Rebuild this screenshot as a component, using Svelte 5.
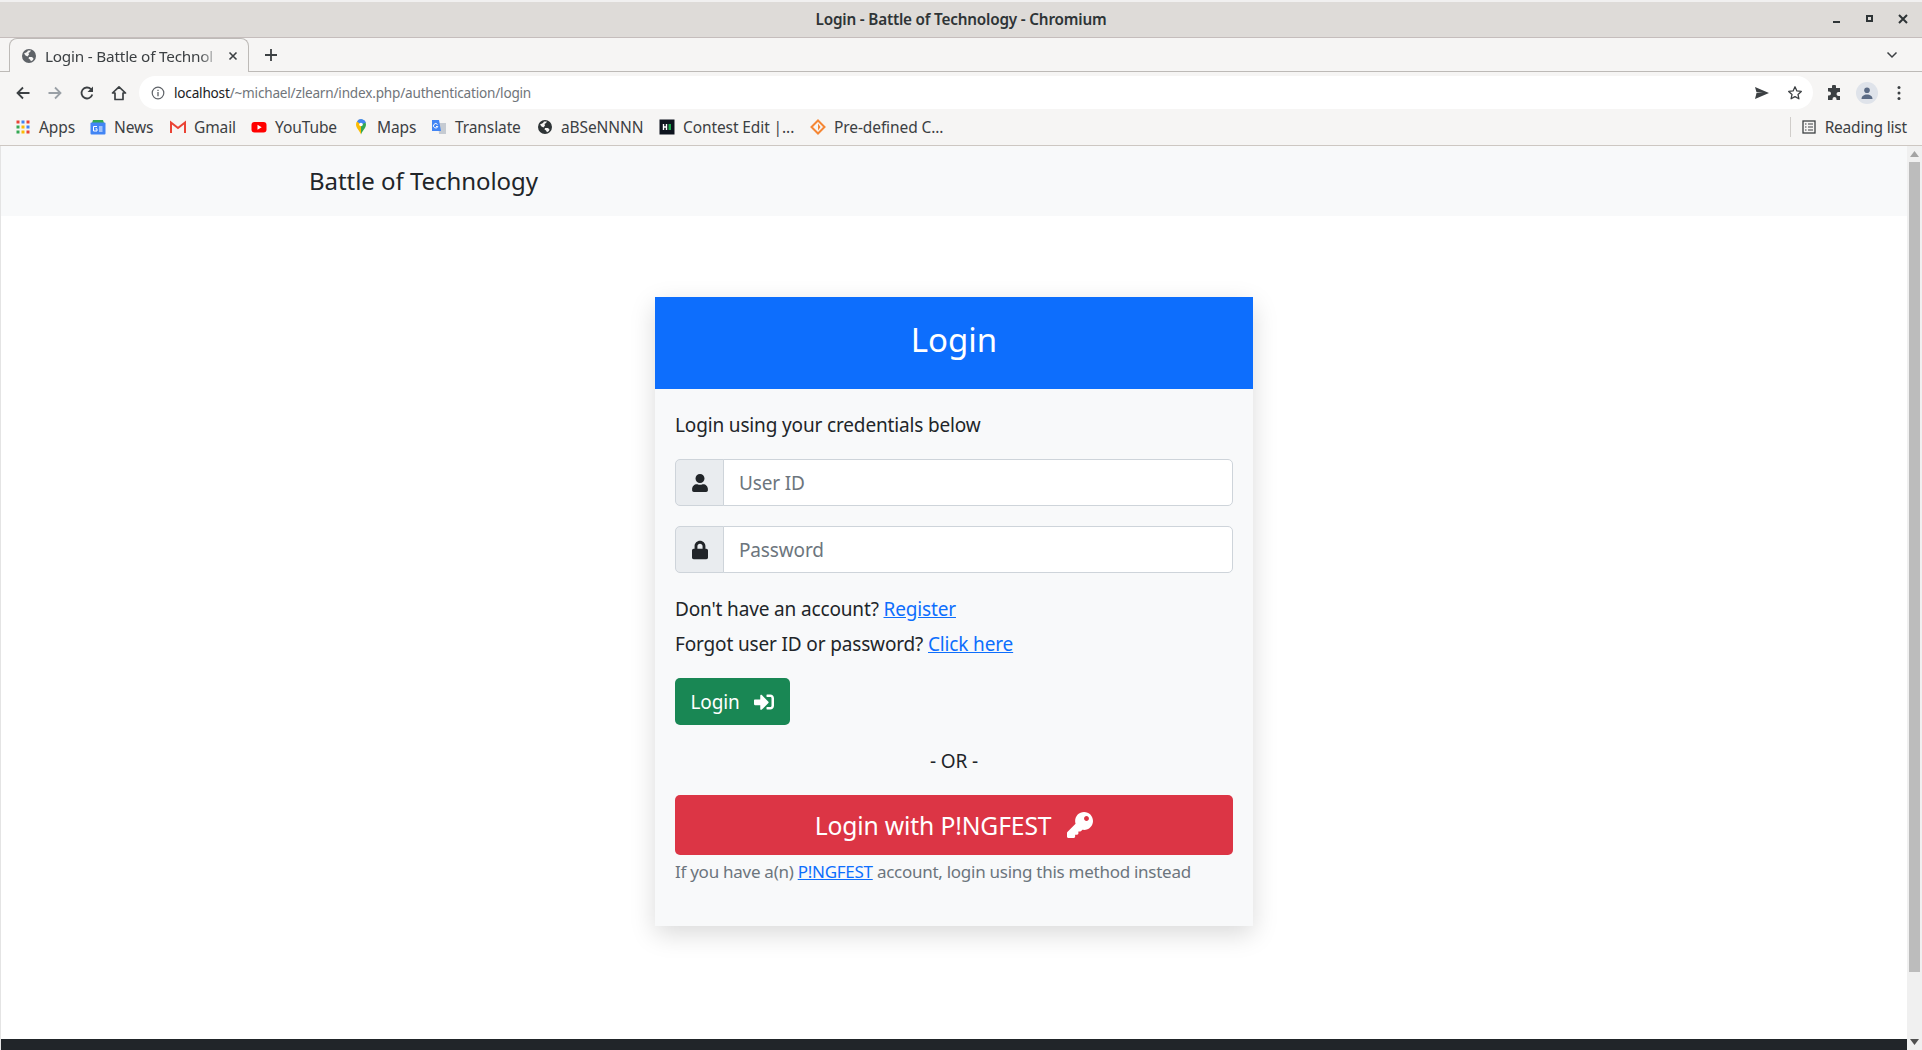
<script>
    const bookmarks = [
        { name: "Apps", icon: "apps" },
        { name: "News", icon: "news" },
        { name: "Gmail", icon: "gmail" },
        { name: "YouTube", icon: "youtube" },
        { name: "Maps", icon: "maps" },
        { name: "Translate", icon: "translate" },
        { name: "aBSeNNNN", icon: "globe" },
        { name: "Contest Edit |...", icon: "hr" },
        { name: "Pre-defined C...", icon: "diamond" }
    ];
    const appColors = ["#ea4335", "#4285f4", "#ea4335", "#34a853", "#fbbc04", "#4285f4", "#34a853", "#fbbc04", "#ea4335"];
    const globe = "M8 1a7 7 0 1 0 0 14A7 7 0 0 0 8 1zM3 5.5 6 4l1-1.5h3L9 4 7.5 5 8 6.500 6.500 8.500 4.500 7.500zM10 13.300l-1-1.800-1.500-1 .5-1.500h3l1.500 1.500-.5 1.500z";
</script>

<div class="screen">
    <header class="chrome">
        <div class="titlebar">
            <span class="window-title">Login - Battle of Technology - Chromium</span>
            <div class="window-buttons">
                <svg width="12" height="12" viewBox="0 0 12 12"><rect x="2" y="8" width="7" height="2" fill="#2e3436"/></svg>
                <svg width="12" height="12" viewBox="0 0 12 12"><rect x="3" y="3" width="5" height="5" fill="none" stroke="#2e3436" stroke-width="2"/></svg>
                <svg width="12" height="12" viewBox="0 0 12 12"><path d="M2 2l8 8M10 2l-8 8" stroke="#2e3436" stroke-width="2"/></svg>
            </div>
        </div>

        <div class="tabstrip">
            <div class="tab">
                <svg class="favicon" width="16" height="16" viewBox="0 0 16 16"><path fill-rule="evenodd" fill="#5f6368" d={globe}/></svg>
                <span class="tab-title">Login - Battle of Technol</span>
                <svg class="tab-close" width="10" height="10" viewBox="0 0 10 10"><path d="M1.500 1.500l7 7M8.500 1.500l-7 7" stroke="#3c4043" stroke-width="1.600"/></svg>
            </div>
            <svg class="new-tab" width="14" height="14" viewBox="0 0 14 14"><path d="M7 1v12M1 7h12" stroke="#3c4043" stroke-width="1.800"/></svg>
            <svg class="tab-menu" width="12" height="8" viewBox="0 0 12 8"><path d="M1.500 1.500 6 6l4.500-4.500" fill="none" stroke="#3c4043" stroke-width="1.500"/></svg>
        </div>

        <div class="toolbar">
            <svg width="16" height="16" viewBox="0 0 16 16"><path d="M14.500 8H2.500M8 2.500 2.500 8 8 13.500" fill="none" stroke="#3c4043" stroke-width="1.800"/></svg>
            <svg width="16" height="16" viewBox="0 0 16 16"><path d="M1.500 8h12M8 2.500 13.500 8 8 13.500" fill="none" stroke="#9aa0a6" stroke-width="1.800"/></svg>
            <svg width="16" height="16" viewBox="0 0 16 16"><path d="M13.300 9.500A5.500 5.500 0 1 1 12 4.200" fill="none" stroke="#3c4043" stroke-width="1.800"/><path d="M14 1.500v5.500H8.500z" fill="#3c4043"/></svg>
            <svg width="16" height="16" viewBox="0 0 16 16"><path d="M8 1.800 1.500 8H4v6.500h8V8h2.500z" fill="none" stroke="#3c4043" stroke-width="1.700" stroke-linejoin="round"/></svg>
            <div class="omnibox">
                <svg width="14" height="14" viewBox="0 0 14 14"><circle cx="7" cy="7" r="5.800" fill="none" stroke="#5f6368" stroke-width="1.200"/><path d="M7 6v4.200M7 3.700v1.300" stroke="#5f6368" stroke-width="1.300"/></svg>
                <span class="url"><b>localhost</b>/~michael/zlearn/index.php/authentication/login</span>
                <svg class="send" width="16" height="14" viewBox="0 0 16 14"><path d="M1 1l14 6-14 6 1.500-6L9 7 2.500 6.200z" fill="#3c4043"/></svg>
                <svg class="star" width="16" height="16" viewBox="0 0 16 16"><path d="M8 1.800l1.900 4.100 4.400.5-3.300 3 .9 4.400L8 11.600l-3.900 2.200.9-4.400-3.300-3 4.400-.5z" fill="none" stroke="#3c4043" stroke-width="1.300" stroke-linejoin="round"/></svg>
            </div>
            <svg class="puzzle" width="16" height="16" viewBox="0 0 16 16"><path d="M6 1.500a2 2 0 0 1 4 0V3h4v4h-1.500a2 2 0 0 0 0 4H14v4h-3.500v-1a2 2 0 0 0-4 0v1H2v-4.500h1a2 2 0 0 0 0-4H2V3h4z" fill="#3c4043"/></svg>
            <div class="avatar">
                <svg width="14" height="14" viewBox="0 0 14 14"><circle cx="7" cy="4.200" r="2.800" fill="#5b6b85"/><path d="M1.500 13c0-3 2.500-4.500 5.500-4.500s5.500 1.500 5.500 4.500z" fill="#5b6b85"/></svg>
            </div>
            <svg class="dots" width="4" height="16" viewBox="0 0 4 16"><circle cx="2" cy="2.500" r="1.500" fill="#3c4043"/><circle cx="2" cy="8" r="1.500" fill="#3c4043"/><circle cx="2" cy="13.500" r="1.500" fill="#3c4043"/></svg>
        </div>

        <div class="bookmarks">
            {#each bookmarks as b}
                <div class="bookmark">
                    <svg width="16" height="16" viewBox="0 0 16 16">
                        {#if b.icon === "apps"}
                            {#each appColors as c, i}
                                <rect x={1.500 + (i % 3) * 5} y={1.500 + Math.floor(i / 3) * 5} width="3" height="3" fill={c}/>
                            {/each}
                        {:else if b.icon === "news"}
                            <path d="M3 1h10l1 3H2z" fill="#34a853"/>
                            <rect x="0.500" y="3.500" width="15" height="12" rx="1" fill="#4285f4"/>
                            <path d="M7 7.500H3.500v4.500H7V9.800H5.500M9 8h3.500M9 10h3.500M9 12h3.500" fill="none" stroke="#fff" stroke-width="1"/>
                        {:else if b.icon === "gmail"}
                            <path d="M1 14V3.500l7 5.500 7-5.500V14" fill="none" stroke="#ea4335" stroke-width="2"/>
                        {:else if b.icon === "youtube"}
                            <rect x="0.500" y="3" width="15" height="10.500" rx="3" fill="#f00"/>
                            <path d="M6.500 5.800v5l4.200-2.500z" fill="#fff"/>
                        {:else if b.icon === "maps"}
                            <path d="M8 .5a5 5 0 0 0-5 5c0 3.500 3.500 6 5 10z" fill="#fbbc04"/>
                            <path d="M8 .5a5 5 0 0 1 5 5c0 3.500-3.500 6-5 10z" fill="#34a853"/>
                            <path d="M4 2.500A5 5 0 0 1 13 3.500L8 5.500z" fill="#4285f4"/>
                            <circle cx="8" cy="5.500" r="1.800" fill="#fff"/>
                        {:else if b.icon === "translate"}
                            <path d="M7 4h8v11H8z" fill="#c6cbd2"/>
                            <path d="M1 1h7l2 11H1z" fill="#4285f4"/>
                            <path d="M6.500 5.500a2.200 2.200 0 1 0 .3 2H5" fill="none" stroke="#fff" stroke-width="1"/>
                        {:else if b.icon === "globe"}
                            <path fill-rule="evenodd" fill="#2e3436" d={globe}/>
                        {:else if b.icon === "hr"}
                            <rect x="0.500" y="0.500" width="15" height="15" fill="#0e141e"/>
                            <path d="M4.500 5v6M7.500 5v6M4.500 8h3" stroke="#fff" stroke-width="1.400"/>
                            <rect x="9.500" y="5" width="2.500" height="6" fill="#1ba94c"/>
                        {:else}
                            <path d="M8 1.500 14.500 8 8 14.500 1.500 8z" fill="none" stroke="#f58634" stroke-width="2"/>
                            <path d="M8 4.500 10.500 8 8 11.500z" fill="#f58634"/>
                        {/if}
                    </svg>
                    <span>{b.name}</span>
                </div>
            {/each}
            <div class="reading">
                <svg width="14" height="14" viewBox="0 0 14 14"><rect x="1" y="1" width="12" height="12" fill="none" stroke="#3c4043" stroke-width="1.300"/><path d="M3 4h1.500M3 7h1.500M3 10h1.500M6 4h5M6 7h5M6 10h5" stroke="#3c4043" stroke-width="1.200"/></svg>
                <span>Reading list</span>
            </div>
        </div>
    </header>

    <div class="viewport">
        <div class="page">
            <nav class="navbar"><span class="brand">Battle of Technology</span></nav>

            <main class="content">
                <section class="card">
                    <div class="card-header">Login</div>
                    <div class="card-body">
                        <p class="intro">Login using your credentials below</p>

                        <div class="input-group">
                            <span class="addon">
                                <svg width="16" height="18" viewBox="0 0 448 512"><path fill="#212529" d="M224 256c70.700 0 128-57.300 128-128S294.700 0 224 0 96 57.300 96 128s57.300 128 128 128zm89.600 32h-16.700c-22.200 10.200-46.900 16-72.900 16s-50.600-5.800-72.900-16h-16.700C60.200 288 0 348.200 0 422.400V464c0 26.500 21.500 48 48 48h352c26.500 0 48-21.500 48-48v-41.600c0-74.200-60.200-134.400-134.400-134.400z"/></svg>
                            </span>
                            <input type="text" placeholder="User ID" />
                        </div>
                        <div class="input-group">
                            <span class="addon">
                                <svg width="16" height="20" viewBox="0 0 448 512"><path fill="#212529" d="M400 224h-24v-72C376 68.200 307.800 0 224 0S72 68.200 72 152v72H48c-26.500 0-48 21.500-48 48v192c0 26.500 21.500 48 48 48h352c26.500 0 48-21.500 48-48V272c0-26.500-21.500-48-48-48zm-104 0H152v-72c0-39.700 32.300-72 72-72s72 32.300 72 72v72z"/></svg>
                            </span>
                            <input type="password" placeholder="Password" />
                        </div>

                        <p class="line">Don't have an account? <a href="#register">Register</a></p>
                        <p class="line">Forgot user ID or password? <a href="#forgot">Click here</a></p>

                        <button class="btn btn-login">
                            Login
                            <svg width="22" height="20" viewBox="0 0 512 512"><path fill="#fff" d="M416 448h-84c-6.600 0-12-5.400-12-12v-40c0-6.600 5.400-12 12-12h84c17.700 0 32-14.300 32-32V160c0-17.700-14.300-32-32-32h-84c-6.600 0-12-5.400-12-12V76c0-6.600 5.400-12 12-12h84c53 0 96 43 96 96v192c0 53-43 96-96 96zm-47-201L201 79c-15-15-41-4.500-41 17v96H24c-13.300 0-24 10.700-24 24v96c0 13.300 10.700 24 24 24h136v96c0 21.500 26 32 41 17l168-168c9.300-9.400 9.300-24.600 0-34z"/></svg>
                        </button>

                        <div class="or">- OR -</div>

                        <button class="btn btn-sso">
                            Login with P!NGFEST
                            <svg width="26" height="26" viewBox="0 0 512 512"><path fill="#fff" d="M512 176.001C512 273.203 433.202 352 336 352c-11.220 0-22.190-1.062-32.827-3.069l-24.012 27.014A23.999 23.999 0 0 1 261.223 384H224v40c0 13.255-10.745 24-24 24h-40v40c0 13.255-10.745 24-24 24H24c-13.255 0-24-10.745-24-24v-78.059c0-6.365 2.529-12.470 7.029-16.971l161.802-161.802C163.108 213.814 160 195.271 160 176 160 78.798 238.797.001 335.999 0 433.488-.001 512 78.511 512 176.001zM336 128c0 26.510 21.490 48 48 48s48-21.490 48-48-21.490-48-48-48-48 21.490-48 48z"/></svg>
                        </button>

                        <p class="hint">If you have a(n) <a href="#pingfest">P!NGFEST</a> account, login using this method instead</p>
                    </div>
                </section>
            </main>

            <footer class="footer"></footer>
        </div>

        <div class="scrollbar">
            <svg width="9" height="6" viewBox="0 0 9 6"><path d="M4.500 0 9 6H0z" fill="#a3a3a3"/></svg>
            <div class="thumb"></div>
            <svg width="9" height="6" viewBox="0 0 9 6"><path d="M4.500 6 9 0H0z" fill="#505050"/></svg>
        </div>
    </div>
</div>

<style>
    :global(body) {
        overflow: hidden;
        background: #fff;
    }

    .screen {
        height: 1050px;
        display: flex;
        flex-direction: column;
        font-family: "Noto Sans", sans-serif;
        color: #212529;
    }

    .chrome {
        background: #f6f5f4;
        color: #3c4043;
        border-bottom: 1px solid #cdc7c2;
        flex-shrink: 0;
    }

    .titlebar {
        height: 38px;
        box-sizing: border-box;
        border-top: 2px solid #f1f0f0;
        background: #dedbd8;
        border-bottom: 1px solid #c5bdbc;
        display: flex;
        align-items: center;
        justify-content: center;
        padding-bottom: 2px;
        position: relative;
    }

    .window-title {
        font-size: 15.300px;
        font-weight: 600;
        color: #2e3436;
        letter-spacing: -0.2px;
    }

    .window-buttons {
        position: absolute;
        right: 13px;
        top: 11px;
        display: flex;
        gap: 21px;
    }

    .tabstrip {
        height: 34px;
        box-sizing: border-box;
        display: flex;
        align-items: flex-end;
        padding-left: 9px;
        border-bottom: 1px solid #bdbab7;
    }

    .tab {
        width: 240px;
        height: 34px;
        margin-bottom: -1px;
        box-sizing: border-box;
        background: #f6f5f4;
        border: 1px solid #bdbab7;
        border-bottom: 0;
        border-radius: 8px 8px 0 0;
        display: flex;
        align-items: center;
        padding: 0 10px 0 11px;
        gap: 8px;
        font-size: 15.300px;
    }

    .tab-title {
        flex: 1;
        overflow: hidden;
        white-space: nowrap;
        letter-spacing: -0.2px;
        -webkit-mask-image: linear-gradient(to right, #000 88%, transparent 100%);
        mask-image: linear-gradient(to right, #000 88%, transparent 100%);
    }

    .new-tab {
        margin: 0 0 9px 15px;
    }

    .tab-menu {
        margin: 0 24px 12px auto;
    }

    .toolbar {
        height: 37px;
        box-sizing: border-box;
        display: flex;
        align-items: center;
        padding: 4px 0 0 15px;
    }

    .toolbar > svg {
        margin-right: 16px;
    }

    .omnibox {
        width: 1674px;
        height: 33px;
        margin-left: -4px;
        background: #fff;
        border-radius: 17px;
        display: flex;
        align-items: center;
        padding: 0 10px 0 12px;
        box-sizing: border-box;
    }

    .url {
        margin-left: 9px;
        font-size: 13.600px;
        color: #70757a;
        letter-spacing: -0.2px;
    }

    .url b {
        font-weight: 400;
        color: #202124;
    }

    .send {
        margin-left: auto;
        margin-right: 17px;
    }

    .toolbar > .puzzle {
        margin-left: 13px;
        margin-right: 14px;
    }

    .avatar {
        width: 22px;
        height: 22px;
        border-radius: 50%;
        background: #dfe3ea;
        display: flex;
        align-items: center;
        justify-content: center;
        margin-right: 19px;
    }

    .bookmarks {
        height: 36px;
        display: grid;
        grid-template-columns: 75px 80px 81px 102px 78px 106px 122px 151px 1fr auto;
        align-items: center;
        padding-left: 15px;
        font-size: 15.500px;
    }

    .bookmark {
        display: flex;
        align-items: center;
        gap: 8px;
        letter-spacing: -0.1px;
        white-space: nowrap;
    }

    .reading {
        grid-column: 10;
        display: flex;
        align-items: center;
        gap: 9px;
        padding: 0 15px 0 12px;
        position: relative;
        letter-spacing: -0.2px;
    }

    .reading::before {
        content: "";
        position: absolute;
        left: 0;
        top: 1px;
        bottom: 1px;
        width: 1px;
        background: #d0cdca;
    }

    .viewport {
        flex: 1;
        min-height: 0;
        display: flex;
    }

    .page {
        flex: 1;
        min-width: 0;
        display: flex;
        flex-direction: column;
        border-left: 1px solid #e4e4e4;
    }

    .navbar {
        height: 70px;
        box-sizing: border-box;
        background: #f8f9fa;
        display: flex;
        align-items: center;
        padding: 0 0 2px 308px;
        flex-shrink: 0;
    }

    .brand {
        font-size: 24px;
        letter-spacing: -0.05px;
        color: #212529;
    }

    .content {
        flex: 1;
        display: flex;
        justify-content: center;
        align-items: flex-start;
        padding-top: 81px;
    }

    .card {
        width: 598px;
        background: #f8f9fa;
        box-shadow: 0 8px 24px rgba(0, 0, 0, 0.15);
    }

    .card-header {
        height: 92px;
        background: #0d6efd;
        color: #fff;
        font-size: 33px;
        display: flex;
        align-items: center;
        justify-content: center;
        padding-bottom: 8px;
        box-sizing: border-box;
    }

    .card-body {
        height: 537px;
        box-sizing: border-box;
        padding: 22px 20px 0;
        display: flex;
        flex-direction: column;
        font-size: 19px;
        letter-spacing: -0.15px;
    }

    p {
        margin: 0;
    }

    .intro {
        line-height: 28px;
        margin-bottom: 20px;
    }

    .input-group {
        display: flex;
        height: 47px;
        margin-bottom: 20px;
    }

    .addon {
        width: 49px;
        flex-shrink: 0;
        box-sizing: border-box;
        background: #e9ecef;
        border: 1px solid #ced4da;
        border-radius: 5px 0 0 5px;
        display: flex;
        align-items: center;
        justify-content: center;
    }

    input {
        flex: 1;
        min-width: 0;
        box-sizing: border-box;
        margin-left: -1px;
        border: 1px solid #ced4da;
        border-radius: 0 5px 5px 0;
        background: #fff;
        padding: 1px 15px 0;
        font: inherit;
        letter-spacing: inherit;
        color: #212529;
        outline: none;
    }

    input::placeholder {
        color: #6c757d;
        opacity: 1;
    }

    .line {
        line-height: 35px;
    }

    .input-group + .line {
        margin-top: -1px;
    }

    a {
        color: #0d6efd;
        text-decoration: underline;
    }

    .btn {
        border: none;
        color: #fff;
        border-radius: 5px;
        font-family: inherit;
        letter-spacing: inherit;
        display: flex;
        align-items: center;
        justify-content: center;
    }

    .btn-login {
        width: 115px;
        height: 47px;
        margin-top: 16px;
        background: #198754;
        font-size: 19px;
        gap: 13px;
    }

    .or {
        text-align: center;
        margin-top: 22px;
        line-height: 28px;
    }

    .btn-sso {
        height: 60px;
        margin-top: 20px;
        background: #dc3545;
        font-size: 24.700px;
        gap: 16px;
    }

    .hint {
        margin-top: 5px;
        font-size: 17px;
        line-height: 24px;
        letter-spacing: -0.27px;
        color: #6c757d;
    }

    .footer {
        height: 11px;
        background: #212529;
        flex-shrink: 0;
    }

    .scrollbar {
        width: 15px;
        flex-shrink: 0;
        background: #f0f0f0;
        display: flex;
        flex-direction: column;
        align-items: center;
        padding: 5px 0;
        box-sizing: border-box;
    }

    .thumb {
        width: 11px;
        height: 810px;
        background: #bcbcbc;
        margin: 5px 0 auto;
    }
</style>
